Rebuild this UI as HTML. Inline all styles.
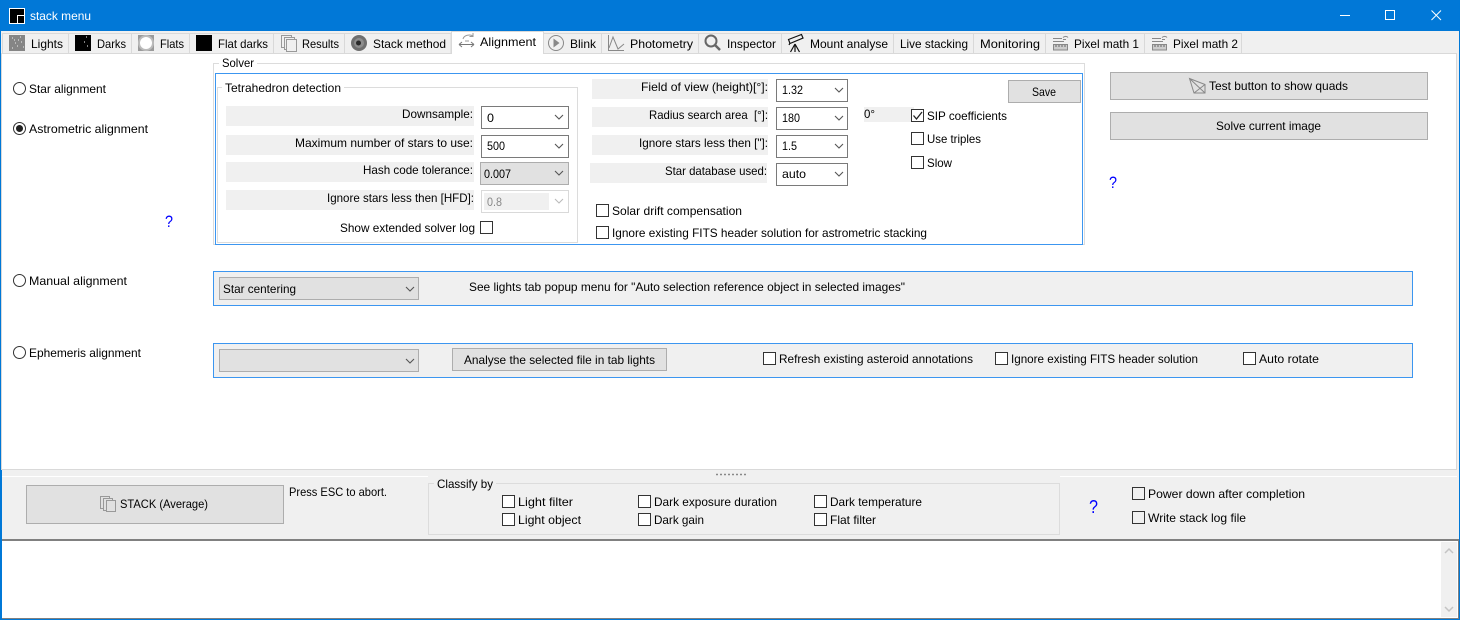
<!DOCTYPE html>
<html><head><meta charset="utf-8"><style>
html,body{margin:0;padding:0;background:#fff;width:1460px;height:620px;overflow:hidden}
svg{display:block}
text{font-family:"Liberation Sans",sans-serif;font-size:12px;fill:#000}
rect{shape-rendering:crispEdges}
.p{fill:#f0f0f0}
.cb{fill:#fff;stroke:#333;stroke-width:1}
.cg{fill:#f0f0f0;stroke:#333;stroke-width:1}
.ch{fill:none;stroke:#555;stroke-width:1.1}
.cm{fill:#fff;stroke:#7a7a7a}
.cd{fill:#e1e1e1;stroke:#adadad}
.bt{fill:#e1e1e1;stroke:#adadad}
.g{fill:none;stroke:#dcdcdc}
.ic{fill:none;stroke:#999}
</style></head><body>
<svg width="1460" height="620" viewBox="0 0 1460 620" xmlns="http://www.w3.org/2000/svg">
<rect width="1460" height="620" fill="#0078d7"/>
<rect x="1" y="31" width="1458" height="588" fill="#f0f0f0"/>
<rect x="1" y="0" width="1458" height="31" fill="#0178d7"/>
<!-- title -->
<rect x="9.500" y="8.500" width="15" height="15" fill="#000" stroke="#fff"/>
<path d="M17.500 23V15.500H24" stroke="#fff" fill="none"/>
<text x="30" y="20" textLength="61" lengthAdjust="spacingAndGlyphs" style="fill:#fff">stack menu</text>
<path d="M1340 15.500h10" stroke="#fff"/>
<rect x="1385.500" y="10.500" width="9" height="9" fill="none" stroke="#fff"/>
<path d="M1431.500 10.500l9.500 9.500M1441 10.500l-9.500 9.500" stroke="#fff" fill="none"/>
<!-- content -->
<rect x="1" y="53" width="1456" height="417" fill="#d9d9d9"/>
<rect x="2" y="54" width="1454" height="415" fill="#fff"/>
<!-- tabs -->
<g fill="#f0f0f0" stroke="#d9d9d9">
<path d="M2.500 53V33.500H68.500V53M131.500 53V33.500H69M189.500 53V33.500H132M273.500 53V33.500H190M344.500 53V33.500H274M451 53V33.500H345M601.500 53V33.500H544M698.500 53V33.500H602M781.500 53V33.500H699M893.500 53V33.500H782M973.500 53V33.500H894M1045.500 53V33.500H974M1144.500 53V33.500H1046M1241.500 53V33.500H1145" style="shape-rendering:crispEdges"/>
</g>
<rect x="451" y="31" width="93" height="24" fill="#fff"/>
<path d="M451.500 54V31.500H543.500V54" fill="none" stroke="#d9d9d9"/>
<!-- tab icons -->
<rect x="9" y="35" width="16" height="16" fill="#858585"/>
<path d="M12 48h1M15 43h1M18 40h1M20 37h1M21 42h1M17 46h1M12 38h1M23 47h1M14 40h1" stroke="#eee"/>
<rect x="75" y="35" width="16" height="16" fill="#000"/>
<path d="M86 37h1M84 42h1M87 46h1" stroke="#fff"/>
<rect x="138" y="35" width="16" height="16" fill="#9a9a9a"/>
<circle cx="146" cy="43" r="8" fill="#bbb"/>
<circle cx="146" cy="43" r="6" fill="#fff"/>
<rect x="196" y="35" width="16" height="16" fill="#000"/>
<g class="ic"><rect x="281.500" y="35.500" width="10" height="12" fill="#f0f0f0"/><rect x="284.500" y="37.500" width="10" height="12" fill="#f0f0f0"/><rect x="286.500" y="39.500" width="10" height="12" fill="#f0f0f0"/></g>
<circle cx="359" cy="43" r="8" fill="#6f6f6f"/>
<circle cx="359" cy="43" r="5" fill="#8d8d8d"/>
<circle cx="358.500" cy="43" r="2.500" fill="#2a2a2a"/>
<path d="M459 44.500h15M459 44.500l3-2.500M459 44.500l3 2.500M474 44.500l-3-2.500M474 44.500l-3 2.500" stroke="#777" fill="none"/>
<path d="M463 39c1-4 7-5 10-3M473 33v3.500h-3.500M465 41h4" stroke="#999" fill="none"/>
<circle cx="556" cy="43" r="7.500" fill="none" stroke="#888"/>
<path d="M553.500 38.500l6 4.500-6 4.500z" fill="#888"/>
<path d="M608.500 35v15.500H624M609 48l4-11 5 12 6-5" stroke="#888" fill="none"/>
<circle cx="711" cy="41" r="5.500" fill="none" stroke="#666" stroke-width="2"/>
<path d="M715 45l5 5" stroke="#666" stroke-width="2.500"/>
<path d="M788.500 39.500l13-5 1.500 3.500-13 5.500zM795 44l-4.500 8M795 44v8M795 44l4.500 8M790 43l-1 2" stroke="#111" fill="none" stroke-width="1.200"/>
<g id="pm" stroke="#888" fill="none"><path d="M1053 38.500h9M1053 41.500h11M1063 37.500c1.500-1.500 4-1.500 5 0M1063 39.500h3" /><rect x="1053.500" y="44.500" width="14" height="5.500" fill="#ccc"/><path d="M1056 45v2M1059 45v2M1062 45v2M1065 45v2" stroke="#666"/></g>
<g stroke="#888" fill="none"><path d="M1152 38.500h9M1152 41.500h11M1162 37.500c1.500-1.500 4-1.500 5 0M1162 39.500h3" /><rect x="1152.500" y="44.500" width="14" height="5.500" fill="#ccc"/><path d="M1155 45v2M1158 45v2M1161 45v2M1164 45v2" stroke="#666"/></g>
<!-- tab labels -->
<text x="31" y="48" textLength="32" lengthAdjust="spacingAndGlyphs">Lights</text>
<text x="97" y="48" textLength="29" lengthAdjust="spacingAndGlyphs">Darks</text>
<text x="160" y="48" textLength="24" lengthAdjust="spacingAndGlyphs">Flats</text>
<text x="218" y="48" textLength="50" lengthAdjust="spacingAndGlyphs">Flat darks</text>
<text x="302" y="48" textLength="37" lengthAdjust="spacingAndGlyphs">Results</text>
<text x="373" y="48" textLength="73" lengthAdjust="spacingAndGlyphs">Stack method</text>
<text x="480" y="46" textLength="56" lengthAdjust="spacingAndGlyphs">Alignment</text>
<text x="570" y="48" textLength="26" lengthAdjust="spacingAndGlyphs">Blink</text>
<text x="630" y="48" textLength="63" lengthAdjust="spacingAndGlyphs">Photometry</text>
<text x="727" y="48" textLength="49" lengthAdjust="spacingAndGlyphs">Inspector</text>
<text x="810" y="48" textLength="78" lengthAdjust="spacingAndGlyphs">Mount analyse</text>
<text x="900" y="48" textLength="68" lengthAdjust="spacingAndGlyphs">Live stacking</text>
<text x="980" y="48" textLength="60" lengthAdjust="spacingAndGlyphs">Monitoring</text>
<text x="1074" y="48" textLength="65" lengthAdjust="spacingAndGlyphs">Pixel math 1</text>
<text x="1173" y="48" textLength="65" lengthAdjust="spacingAndGlyphs">Pixel math 2</text>
<!-- radios -->
<g fill="#fff" stroke="#333"><circle cx="19.500" cy="88.500" r="6"/><circle cx="19.500" cy="128.500" r="6"/><circle cx="19.500" cy="280.500" r="6"/><circle cx="19.500" cy="352.500" r="6"/></g>
<circle cx="19.500" cy="128.500" r="3.500" fill="#222"/>
<text x="29" y="93" textLength="77" lengthAdjust="spacingAndGlyphs">Star alignment</text>
<text x="29" y="133" textLength="119" lengthAdjust="spacingAndGlyphs">Astrometric alignment</text>
<text x="29" y="285" textLength="98" lengthAdjust="spacingAndGlyphs">Manual alignment</text>
<text x="29" y="357" textLength="112" lengthAdjust="spacingAndGlyphs">Ephemeris alignment</text>
<text x="165" y="227" textLength="8" lengthAdjust="spacingAndGlyphs" style="font-size:17px;fill:#0000ff">?</text>
<text x="1109" y="188" textLength="8" lengthAdjust="spacingAndGlyphs" style="font-size:17px;fill:#0000ff">?</text>
<!-- solver group -->
<rect x="213.500" y="63.500" width="871" height="181" class="g"/>
<rect x="219" y="60" width="38" height="8" fill="#fff"/>
<text x="222" y="67" textLength="32" lengthAdjust="spacingAndGlyphs">Solver</text>
<rect x="215.500" y="73.500" width="867" height="171" fill="#fff" stroke="#3c96f0"/>
<rect x="217.500" y="87.500" width="360" height="155" class="g"/>
<rect x="222" y="84" width="122" height="8" fill="#fff"/>
<text x="225" y="92" textLength="116" lengthAdjust="spacingAndGlyphs">Tetrahedron detection</text>
<!-- label panels -->
<rect x="226" y="106" width="248" height="20" class="p"/>
<rect x="226" y="135" width="248" height="20" class="p"/>
<rect x="226" y="162" width="248" height="20" class="p"/>
<rect x="226" y="190" width="248" height="20" class="p"/>
<rect x="592" y="79" width="176" height="20" class="p"/>
<rect x="592" y="107" width="176" height="20" class="p"/>
<rect x="592" y="135" width="176" height="20" class="p"/>
<rect x="590" y="163" width="177" height="20" class="p"/>
<rect x="864" y="107" width="50" height="15" class="p"/>
<text x="402" y="118" textLength="71" lengthAdjust="spacingAndGlyphs">Downsample:</text>
<text x="295" y="147" textLength="178" lengthAdjust="spacingAndGlyphs">Maximum number of stars to use:</text>
<text x="363" y="174" textLength="110" lengthAdjust="spacingAndGlyphs">Hash code tolerance:</text>
<text x="327" y="202" textLength="147" lengthAdjust="spacingAndGlyphs">Ignore stars less then [HFD]:</text>
<text x="340" y="232" textLength="135" lengthAdjust="spacingAndGlyphs">Show extended solver log</text>
<text x="641" y="91" textLength="127" lengthAdjust="spacingAndGlyphs">Field of view (height)[°]:</text>
<text x="649" y="119" textLength="119" lengthAdjust="spacingAndGlyphs" xml:space="preserve">Radius search area  [°]:</text>
<text x="639" y="147" textLength="129" lengthAdjust="spacingAndGlyphs">Ignore stars less then ["]:</text>
<text x="665" y="175" textLength="102" lengthAdjust="spacingAndGlyphs">Star database used:</text>
<text x="864" y="118" textLength="11" lengthAdjust="spacingAndGlyphs">0°</text>
<!-- combos left -->
<rect x="481.500" y="106.500" width="87" height="22" class="cm"/>
<rect x="481.500" y="135.500" width="87" height="22" class="cm"/>
<rect x="480.500" y="162.500" width="88" height="22" class="cd"/>
<rect x="481.500" y="190.500" width="87" height="22" fill="#fff" stroke="#d9d9d9"/>
<rect x="484" y="193" width="65" height="17" fill="#f0f0f0"/>
<path class="ch" d="M555 115l4 4 4-4M555 144l4 4 4-4M555 171l4 4 4-4"/>
<path class="ch" style="stroke:#bbb" d="M555 199l4 4 4-4"/>
<text x="487" y="122" textLength="7" lengthAdjust="spacingAndGlyphs">0</text>
<text x="487" y="150" textLength="18" lengthAdjust="spacingAndGlyphs">500</text>
<text x="484" y="178" textLength="27" lengthAdjust="spacingAndGlyphs">0.007</text>
<text x="487" y="206" textLength="15" lengthAdjust="spacingAndGlyphs" style="fill:#888">0.8</text>
<!-- combos right -->
<rect x="776.500" y="79.500" width="71" height="22" class="cm"/>
<rect x="776.500" y="107.500" width="71" height="22" class="cm"/>
<rect x="776.500" y="135.500" width="71" height="22" class="cm"/>
<rect x="776.500" y="163.500" width="71" height="22" class="cm"/>
<path class="ch" d="M835 88l4 4 4-4M835 116l4 4 4-4M835 144l4 4 4-4M835 172l4 4 4-4"/>
<text x="782" y="94" textLength="21" lengthAdjust="spacingAndGlyphs">1.32</text>
<text x="782" y="122" textLength="18" lengthAdjust="spacingAndGlyphs">180</text>
<text x="782" y="150" textLength="15" lengthAdjust="spacingAndGlyphs">1.5</text>
<text x="782" y="178" textLength="24" lengthAdjust="spacingAndGlyphs">auto</text>
<!-- checkboxes -->
<g class="cb">
<rect x="480.500" y="221.500" width="12" height="12"/>
<rect x="596.500" y="204.500" width="12" height="12"/>
<rect x="596.500" y="226.500" width="12" height="12"/>
<rect x="911.500" y="109.500" width="12" height="12"/>
<rect x="911.500" y="132.500" width="12" height="12"/>
<rect x="911.500" y="156.500" width="12" height="12"/>
</g>
<path d="M913.500 115.500l3 3.500 5.500-7" fill="none" stroke="#222" stroke-width="1.300"/>
<text x="927" y="120" textLength="80" lengthAdjust="spacingAndGlyphs">SIP coefficients</text>
<text x="927" y="143" textLength="54" lengthAdjust="spacingAndGlyphs">Use triples</text>
<text x="927" y="167" textLength="25" lengthAdjust="spacingAndGlyphs">Slow</text>
<text x="612" y="215" textLength="130" lengthAdjust="spacingAndGlyphs">Solar drift compensation</text>
<text x="612" y="237" textLength="315" lengthAdjust="spacingAndGlyphs">Ignore existing FITS header solution for astrometric stacking</text>
<!-- buttons -->
<rect x="1008.500" y="80.500" width="72" height="22" class="bt"/>
<text x="1032" y="96" textLength="24" lengthAdjust="spacingAndGlyphs">Save</text>
<rect x="1110.500" y="72.500" width="317" height="27" class="bt"/>
<rect x="1110.500" y="112.500" width="317" height="27" class="bt"/>
<path d="M1189.500 78.500l15.500 6v8.500h-11zM1189.500 78.500l15.500 14.500M1205 84.500l-11 8.500" fill="none" stroke="#888"/>
<text x="1209" y="90" textLength="139" lengthAdjust="spacingAndGlyphs">Test button to show quads</text>
<text x="1216" y="130" textLength="105" lengthAdjust="spacingAndGlyphs">Solve current image</text>
<!-- manual panel -->
<rect x="213.500" y="271.500" width="1199" height="34" fill="#f0f0f0" stroke="#3c96f0"/>
<rect x="219.500" y="277.500" width="199" height="22" class="cd"/>
<path class="ch" d="M406 287l4 4 4-4"/>
<text x="223" y="293" textLength="73" lengthAdjust="spacingAndGlyphs">Star centering</text>
<text x="469" y="291" textLength="436" lengthAdjust="spacingAndGlyphs">See lights tab popup menu for "Auto selection reference object in selected images"</text>
<!-- ephemeris panel -->
<rect x="213.500" y="343.500" width="1199" height="34" fill="#f0f0f0" stroke="#3c96f0"/>
<rect x="219.500" y="349.500" width="199" height="22" class="cd"/>
<path class="ch" d="M406 359l4 4 4-4"/>
<rect x="452.500" y="348.500" width="214" height="22" class="bt"/>
<text x="464" y="364" textLength="191" lengthAdjust="spacingAndGlyphs">Analyse the selected file in tab lights</text>
<g class="cg">
<rect x="763.500" y="352.500" width="12" height="12" style="fill:#fff"/>
<rect x="995.500" y="352.500" width="12" height="12" style="fill:#fff"/>
<rect x="1243.500" y="352.500" width="12" height="12" style="fill:#fff"/>
</g>
<text x="779" y="363" textLength="194" lengthAdjust="spacingAndGlyphs">Refresh existing asteroid annotations</text>
<text x="1011" y="363" textLength="187" lengthAdjust="spacingAndGlyphs">Ignore existing FITS header solution</text>
<text x="1259" y="363" textLength="60" lengthAdjust="spacingAndGlyphs">Auto rotate</text>
<!-- splitter -->
<rect x="2" y="476" width="426" height="1" fill="#fff"/>
<rect x="1060" y="476" width="397" height="1" fill="#fff"/>
<path d="M716 474.500h30" stroke="#888" stroke-width="1.500" stroke-dasharray="2 2" fill="none"/>
<!-- bottom panel -->
<rect x="26.500" y="485.500" width="257" height="38" class="bt"/>
<g class="ic"><rect x="100.500" y="496.500" width="9" height="12" fill="#e1e1e1"/><rect x="103.500" y="498.500" width="9" height="12" fill="#e1e1e1"/><rect x="106.500" y="500.500" width="9" height="11" fill="#e1e1e1"/></g>
<text x="120" y="508" textLength="88" lengthAdjust="spacingAndGlyphs">STACK (Average)</text>
<text x="289" y="496" textLength="98" lengthAdjust="spacingAndGlyphs">Press ESC to abort.</text>
<rect x="428.500" y="483.500" width="631" height="51" fill="#f0f0f0" stroke="#dcdcdc"/>
<rect x="434" y="480" width="62" height="8" fill="#f0f0f0"/>
<text x="437" y="488" textLength="56" lengthAdjust="spacingAndGlyphs">Classify by</text>
<g class="cb">
<rect x="502.500" y="495.500" width="12" height="12"/>
<rect x="502.500" y="513.500" width="12" height="12"/>
<rect x="638.500" y="495.500" width="12" height="12"/>
<rect x="638.500" y="513.500" width="12" height="12"/>
<rect x="814.500" y="495.500" width="12" height="12"/>
<rect x="814.500" y="513.500" width="12" height="12"/>
<rect x="1132.500" y="487.500" width="12" height="12" style="fill:none"/>
<rect x="1132.500" y="511.500" width="12" height="12" style="fill:none"/>
</g>
<text x="518" y="506" textLength="55" lengthAdjust="spacingAndGlyphs">Light filter</text>
<text x="518" y="524" textLength="63" lengthAdjust="spacingAndGlyphs">Light object</text>
<text x="654" y="506" textLength="123" lengthAdjust="spacingAndGlyphs">Dark exposure duration</text>
<text x="654" y="524" textLength="50" lengthAdjust="spacingAndGlyphs">Dark gain</text>
<text x="830" y="506" textLength="92" lengthAdjust="spacingAndGlyphs">Dark temperature</text>
<text x="830" y="524" textLength="46" lengthAdjust="spacingAndGlyphs">Flat filter</text>
<text x="1089" y="513" textLength="9" lengthAdjust="spacingAndGlyphs" style="font-size:18px;fill:#0000ff">?</text>
<text x="1148" y="498" textLength="157" lengthAdjust="spacingAndGlyphs">Power down after completion</text>
<text x="1148" y="522" textLength="98" lengthAdjust="spacingAndGlyphs">Write stack log file</text>
<!-- memo -->
<rect x="1" y="470" width="1" height="149" fill="#0078d7"/>
<rect x="2" y="539" width="1457" height="2" fill="#808080"/>
<rect x="2" y="541" width="1456" height="77" fill="#fff"/>
<rect x="1441" y="542" width="16" height="75" fill="#f0f0f0"/>
<path d="M1445 553l4-4 4 4M1445 607l4 4 4-4" fill="none" stroke="#c4c4c4" stroke-width="1.500"/>
<rect x="2" y="618" width="1457" height="1" fill="#808080"/>
<rect x="1458" y="541" width="1" height="78" fill="#808080"/>
</svg>
</body></html>
